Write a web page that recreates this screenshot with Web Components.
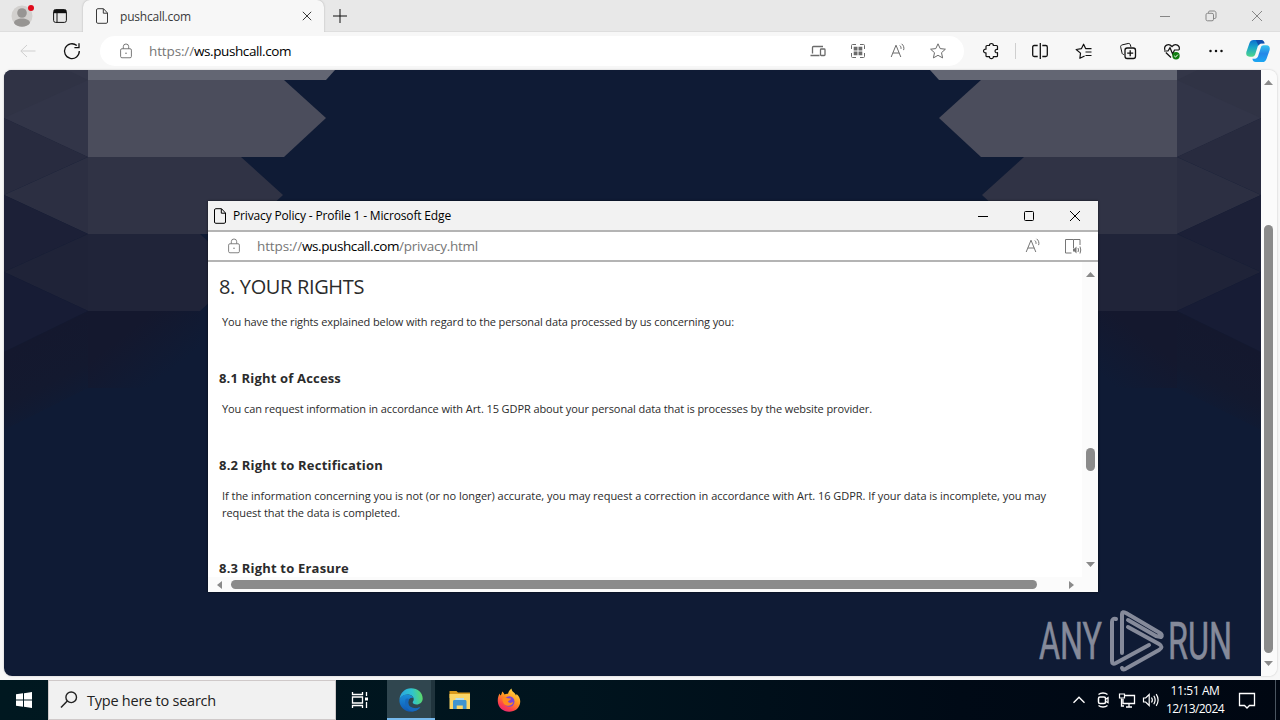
<!DOCTYPE html>
<html lang="en">
<head>
<meta charset="utf-8">
<title>pushcall.com</title>
<style>
  html, body {
    margin: 0;
    height: 100%;
    overflow: hidden;
  }

  body {
    font-family: "Open Sans", "Noto Sans", sans-serif;
    font-size: 12px;
  }
</style>
</head>
<body>
<desktop-screen></desktop-screen>

<script>
// Single line of text, spaced out to a given width
class TextRun extends HTMLElement {
  constructor() {
    super();
    this.attachShadow({ mode: 'open' });
  }

  connectedCallback() {
    this.shadowRoot.innerHTML = `<style>
        :host { display: inline-block; white-space: nowrap; }
        span { display: inline-block; }
      </style><span><slot></slot></span>`;
    const span = this.shadowRoot.querySelector('span');
    const width = Number(this.getAttribute('width'));
    if (!width) return;
    const natural = span.getBoundingClientRect().width;
    span.style.letterSpacing = `${(width - natural) / this.textContent.length}px`;
    this.style.width = `${width}px`;
  }
}
customElements.define('text-run', TextRun);

const ICONS = {
  profile: `<circle cx="10" cy="10" r="10.5" fill="#d2d0ce" stroke="none"/><circle cx="10" cy="7" r="4.8" fill="#979593" stroke="none"/><path d="M2 17c0-6 16-6 16 0-3 5-13 5-16 0z" fill="#979593" stroke="none"/>`,
  tabs: `<rect x="3.6" y="3.6" width="12.8" height="12.8" rx="2"/><path d="M4 5.5h12" stroke-width="3.4"/><path d="M7 7v9" />`,
  page: `<path d="M4.5 4c0-.8.5-1.300 1.300-1.300h5.700l4 4.300v9c0 .8-.5 1.300-1.300 1.300H5.800c-.8 0-1.300-.5-1.300-1.300zM11.300 2.900v4.300h4"/>`,
  close: `<path d="M5.800 5.800l8.400 8.400M14.200 5.800l-8.400 8.400"/>`,
  bigclose: `<path d="M5 5l10 10M15 5L5 15"/>`,
  plus: `<path d="M10 3v14M3 10h14"/>`,
  min: `<path d="M5 10.500h10"/>`,
  max: `<rect x="5.500" y="5.500" width="9" height="9" rx="1"/>`,
  restore: `<rect x="5" y="7.300" width="7.500" height="7.500" rx="1.500"/><path d="M7.500 7V6.300c0-.8.5-1.300 1.300-1.300h4.200c1.200 0 2 .8 2 2v4.200c0 .8-.4 1.300-1.200 1.300h-1"/>`,
  back: `<path d="M17.500 10H3M9 4l-6.200 6L9 16"/>`,
  refresh: `<path d="M17.300 10A7.400 7.400 0 1 1 14.800 4.600M17 2.300v4.400h-4.600" stroke-width="1.300"/>`,
  lock: `<rect x="4" y="7.500" width="12" height="10" rx="1.500"/><path d="M7 7.500V5.200a3 3 0 0 1 6 0v2.300"/><circle cx="10" cy="12.500" r=".8" fill="currentColor" stroke="none"/>`,
  devices: `<path d="M4.500 12.500v-6c0-.6.4-1 1-1H15M2.500 14.500h9" stroke-width="1.300"/><rect x="12.500" y="8" width="4.500" height="6.500" rx=".8" stroke-width="1.300"/>`,
  grid: `<path d="M3.500 8V4.500c0-.6.4-1 1-1H8M12 3.500h3.500c.6 0 1 .4 1 1V8M16.500 12v3.500c0 .6-.4 1-1 1H12M8 16.500H4.500c-.6 0-1-.4-1-1V12"/><path d="M5.700 5.700h3.800v3.800H5.700zM10.500 5.700h3.800v3.800h-3.800zM5.700 10.500h3.800v3.800H5.700zM10.500 10.500h3.800v3.800h-3.800z" fill="currentColor" stroke="none"/>`,
  read: `<path d="M3.200 16L8 4.200 12.800 16M4.800 12h6.400M11.800 4.500c1 .8 1.400 2 1.200 3.400M13.600 2.800c2 1.500 2.800 4 2 6.300"/>`,
  star: `<path d="M10 2.800l2.200 4.800 5.200.6-3.900 3.500 1.100 5.200L10 14.300l-4.600 2.600 1.100-5.200-3.900-3.500 5.200-.6z" stroke-linejoin="round"/>`,
  puzzle: `<path d="M6 4.500h2.500c-.5-2.700 4.300-2.700 3.800 0h3.200c.6 0 1 .4 1 1v3c-3-.7-3.500 3.800 0 3.200v3c0 .6-.4 1-1 1h-3.200c.5 2.600-4.300 2.600-3.800 0H6c-.6 0-1-.4-1-1v-2.900c-3.300.5-3.300-4.100 0-3.600V5.500c0-.6.4-1 1-1z" stroke-width="1.200" stroke-linejoin="round"/>`,
  split: `<path d="M7.700 4.500H4.200c-1 0-1.500.5-1.500 1.500v8c0 1 .5 1.500 1.500 1.500h3.500M12.300 4.500h3.500c1 0 1.500.5 1.500 1.500v8c0 1-.5 1.500-1.500 1.500h-3.500M10.300 2v16" stroke-width="1.300"/>`,
  favorites: `<path d="M10.600 15l-4.700 2.300.6-5.200L2.200 8.500l5.300-.9 2.100-4.400 2 4.400h5.900M11.500 11h6M11.500 14.500h6" stroke-width="1.200" stroke-linejoin="round"/>`,
  collections: `<path d="M6 13.500c-1 0-1.800-.5-2-1.600L2.700 6.200c-.3-1.100.3-2 1.400-2.300l6-1.400c1.100-.2 2 .3 2.300 1.400l.5 2"/><rect x="7" y="7" width="10.500" height="10.500" rx="2.200" stroke-width="1.300"/><path d="M12.200 9.200v6M9.200 12.200h6" stroke-width="1.300"/>`,
  heart: `<path d="M2.900 9C1.500 4.500 6.500 1.700 10 5.500c3.500-3.800 8.500-1 7.100 3.500M3.800 11.500L9 16.500M2 10h4l2-3.300 2.600 6.300L12.500 9H17" stroke-width="1.200"/><circle cx="14" cy="14.800" r="3.700" fill="#107c10" stroke="none"/><path d="M12.200 14.800l1.300 1.300 2.400-2.500" stroke="#fff"/>`,
  dots: `<g fill="currentColor" stroke="none"><circle cx="4.500" cy="10" r="1.250"/><circle cx="10" cy="10" r="1.250"/><circle cx="15.500" cy="10" r="1.250"/></g>`,
  immersive: `<path d="M8.500 17H2.500V3.500h8V12M10.500 3.500H17V9" stroke-width="1"/><path d="M10 12.500h1.500l2-2v7l-2-2H10z" fill="currentColor" stroke="none"/><path d="M15 12q1 2 0 4M17 10.500q1.500 3.500 0 7"/>`,
  copilot: `<defs>
      <linearGradient id="a" x1="0" y1="0" x2="0" y2="1"><stop offset="0" stop-color="#0b6fd0"/><stop offset=".45" stop-color="#1aa6c8"/><stop offset="1" stop-color="#4fd58a"/></linearGradient>
      <linearGradient id="b" x1="0" y1="0" x2="0" y2="1"><stop offset="0" stop-color="#35c3ee"/><stop offset=".5" stop-color="#2587e8"/><stop offset="1" stop-color="#1ba7f2"/></linearGradient>
    </defs>
    <g stroke="none"><path d="M6 0h6c2 0 2.600 1 3.100 3h-2.300c-1.600 0-2.500 1-3 2.600L7.500 13c-.5 1.500-1.300 2.200-2.600 2.200H2.500C0 15.200-1.200 13.600-.6 11L2.200 3C3 .8 4 0 6 0z" fill="url(#a)"/>
    <path d="M8 0h5c1.800 0 2.600 1.200 3.100 3.200h-2.600c-1.300 0-2.200.5-3 2z" fill="#0f4fae"/>
    <path d="M14 20H8c-2 0-2.600-1-3.100-3h2.300c1.600 0 2.500-1 3-2.600L12.500 7c.5-1.500 1.300-2.200 2.600-2.200h2.400c2.500 0 3.700 1.600 3.100 4.200L17.800 17c-.8 2.200-1.800 3-3.800 3z" fill="url(#b)"/></g>`,
  windows: `<path d="M2 4.300l7-1v6.200H2zM10 3.200L18 2v7.500h-8zM2 10.500h7v6.300l-7-1zM10 10.500h8V18l-8-1.200z" fill="currentColor" stroke="none"/>`,
  search: `<circle cx="12.200" cy="7.300" r="5.300" stroke-width="1.400"/><path d="M8.300 11L2 17.500" stroke-width="1.500"/>`,
  taskview: `<path d="M2.500 2v2.500h10V2M2.500 18v-2.500h10V18M2.500 7h10v6h-10zM16.500 2v4M16.500 12v6" stroke-width="1.300"/><path d="M15 7.500h3v3h-3z" fill="currentColor" stroke="none"/>`,
  edge: `<defs>
      <linearGradient id="c" x1="0" y1=".4" x2="1" y2=".3"><stop offset="0" stop-color="#2aa5e0"/><stop offset=".55" stop-color="#2fc3cf"/><stop offset="1" stop-color="#5edb62"/></linearGradient>
      <linearGradient id="d" x1="0" y1="0" x2="0" y2="1"><stop offset="0" stop-color="#1a8fd8"/><stop offset="1" stop-color="#0f58b5"/></linearGradient>
    </defs>
    <g stroke="none"><path d="M-1.500 9.500C-1 3 4-1.700 10-1.700c7 0 11.700 4.700 11.700 10.200 0 3.800-3 6-6 6-2.700 0-4.200-1-4-2.200.2-1 1.200-1.400 1-3.500C12.400 6 9.500 4.500 6.500 4.500c-4 0-6.700 2.200-8 5z" fill="url(#c)"/>
    <path d="M-1.600 9.800c1.200-3.500 4.300-5.500 7.800-5.400 3 .1 5.600 1.600 6.300 3.600-3-1-5.300 1.300-5.300 4.500 0 4.500 4.300 6.500 8 6 1.600-.2 3-.8 4-1.400C17.500 20 14 21.700 10 21.700 3 21.700-2 16-1.600 9.800z" fill="url(#d)"/>
    <path d="M4.700 9C2.500 13.500 6 20.500 11.500 21.600c3.500-.3 6.300-2 8-4.500-5 2.500-12.300.5-12.300-4.600 0-1.500.3-2.600.9-3.500-1.300-.8-2.600-.8-3.400 0z" fill="#1669bd"/></g>`,
  folder: `<g stroke="none"><path d="M-.5 1h7l1.500 1.500h12V8h-20.500z" fill="#d99a1c"/><path d="M-.5 4h20.500v15H-.5z" fill="#fbd667"/><path d="M3 19v-7.500c0-1 .5-1.500 1.500-1.500H15c1 0 1.500.5 1.500 1.500V19h-3.700v-3.500H6.700V19z" fill="#3f94cf"/><path d="M5.500 10V8h8.500v2z" fill="#b6deee"/></g>`,
  firefox: `<defs><linearGradient id="f" x1=".8" y1="0" x2=".25" y2="1"><stop offset="0" stop-color="#ffe24a"/><stop offset=".45" stop-color="#ff9620"/><stop offset=".8" stop-color="#fb3c4e"/><stop offset="1" stop-color="#e3267a"/></linearGradient></defs>
    <g stroke="none"><path d="M.6 3.500c.2 1 .6 1.700 1 2.100C2.300 4.500 3 3 3.200 1.500c1.300.8 1.900 2 2.300 3C6.800 3.700 8 3.500 9 3.800 9.300 1.700 10.500 0 12.500-1.600c.3 2.400 1.200 3.100 3 4.600.7.700 1.200 1.500 1.500 2.500.4-.3.500-1 .5-1.500C20 6 21.400 8.500 21.200 12c-.4 6-5.200 9.800-11 9.800C4 21.800-.8 17.500-1.200 11.500-1.400 8.500-.6 5.500.6 3.500z" fill="url(#f)"/>
    <circle cx="10.300" cy="11.500" r="5.200" fill="#7a45d8"/><path d="M3.500 8c2-.8 4-.7 5.200.3l3.300.3c0 1.600-2.500 1.900-3 3 .8 1.900 3.800 1.500 5.300.2-.4 3.700-5.500 5.400-8.800 2.700C3.800 12.700 3.200 10.500 3.500 8z" fill="#ff8a1e"/></g>`,
  up: `<path d="M4.500 12.700L10 7.300l5.500 5.400" stroke-width="1.400"/>`,
  camera: `<path d="M5.500 4.500c2.500-2 6.500-2 9 0M5.500 15.500c2.500 2 6.500 2 9 0M12.500 9.200l2.500-1.500v5l-2.500-1.500" stroke-width="1.300"/><rect x="5.500" y="7" width="7" height="6.500" rx="1.500" stroke-width="1.500"/>`,
  network: `<path d="M8 5.500h9.500v8H6V9M9 17h6M12 13.500V17M4.500 8.500V16H7" stroke-width="1.300"/><path d="M2.500 4h5v4h-5z" stroke-width="1.200"/>`,
  volume: `<path d="M2.500 8h2.200l3.500-3.500v11L4.700 12H2.500zM10.500 7.500q1.700 2.500 0 5M12.800 5.800q2.700 4.200 0 8.400M15.200 4.200q3.800 5.800 0 11.600" stroke-width="1.200"/>`,
  notice: `<path d="M2.500 3.500h15v12h-5L10 18l-2.500-2.500h-5z" stroke-width="1.300"/>`
};

class UiIcon extends HTMLElement {
  constructor() {
    super();
    this.attachShadow({ mode: 'open' });
  }

  connectedCallback() {
    const size = this.getAttribute('size') || 20;
    this.shadowRoot.innerHTML = `
      <style>
        :host { display: inline-flex; align-items: center; justify-content: center; flex: none; }
        svg { display: block; overflow: visible; }
      </style>
      <svg width="${size}" height="${size}" viewBox="0 0 20 20" fill="none" stroke="currentColor">${ICONS[this.getAttribute('name')]}</svg>
    `;
  }
}
customElements.define('ui-icon', UiIcon);

class ScrollBar extends HTMLElement {
  constructor() {
    super();
    this.attachShadow({ mode: 'open' });
  }

  // "before" is the gap between the first arrow and the thumb, "length" the thumb's length
  connectedCallback() {
    const flat = this.hasAttribute('horizontal');
    const before = this.getAttribute('before');
    const length = this.getAttribute('length');
    this.shadowRoot.innerHTML = `
      <style>
        :host {
          display: flex;
          flex-direction: ${flat ? 'row' : 'column'};
          align-items: center;
          background: #fbfbfb;
          box-sizing: border-box;
        }
        svg { display: block; flex: none; fill: #8a8a8a; }
        .thumb {
          flex: none;
          background: #8b8b8b;
          border-radius: 5px;
          ${flat ? `width: ${length}px; height: 9px; margin-left: ${before}px` : `height: ${length}px; width: 9px; margin-top: ${before}px`};
        }
        .space { flex: 1; }
      </style>
      ${flat
        ? '<svg width="5" height="8"><path d="M5 0v8L0 4z"/></svg>'
        : '<svg width="9" height="5"><path d="M0 5h9L4.500 0z"/></svg>'}
      <div class="thumb"></div>
      <div class="space"></div>
      ${flat
        ? '<svg width="5" height="8"><path d="M0 0v8l5-4z"/></svg>'
        : '<svg width="9" height="5"><path d="M0 0h9L4.500 5z"/></svg>'}
    `;
  }
}
customElements.define('scroll-bar', ScrollBar);

class TabStrip extends HTMLElement {
  constructor() {
    super();
    this.attachShadow({ mode: 'open' });
  }

  connectedCallback() {
    this.shadowRoot.innerHTML = `
      <style>
        :host { display: flex; height: 32px; background: #e8e8e8; color: #111; box-shadow: inset 0 -1px #dedede; }
        .profile { position: relative; width: 20px; margin-left: 12px; display: flex; }
        .badge { position: absolute; right: -2px; top: 5px; width: 6px; height: 6px; border-radius: 50%; background: #e00b1c; }
        .tabs { width: 20px; margin: 0 13px 0 18px; }
        .tab {
          width: 241px;
          box-sizing: border-box;
          padding: 0 7px 0 9px;
          display: flex;
          align-items: center;
          background: #f7f7f7;
          border-radius: 7px 7px 0 0;
          box-shadow: 0 0 2px #aaa;
          clip-path: inset(0 -2px);
          font-size: 12px;
          color: #3a3a3a;
        }
        .tab text-run { margin-left: 8px; }
        .tab .x { margin-left: auto; }
        .plus { margin-left: 6px; }
        .controls { margin-left: auto; display: flex; color: #868686; }
        .controls ui-icon { width: 46px; }
      </style>
      <div class="profile"><ui-icon name="profile"></ui-icon><div class="badge"></div></div>
      <ui-icon class="tabs" name="tabs"></ui-icon>
      <div class="tab">
        <ui-icon name="page"></ui-icon>
        <text-run width="71">pushcall.com</text-run>
        <ui-icon class="x" name="close"></ui-icon>
      </div>
      <ui-icon class="plus" name="plus"></ui-icon>
      <div class="controls"><ui-icon name="min"></ui-icon><ui-icon name="restore"></ui-icon><ui-icon name="bigclose"></ui-icon></div>
    `;
  }
}
customElements.define('tab-strip', TabStrip);

class BrowserToolbar extends HTMLElement {
  constructor() {
    super();
    this.attachShadow({ mode: 'open' });
  }

  connectedCallback() {
    this.shadowRoot.innerHTML = `
      <style>
        :host { display: flex; align-items: center; height: 38px; background: #f7f7f7; color: #111; box-sizing: border-box; padding-left: 8px; }
        ui-icon { width: 40px; height: 30px; }
        .back { color: #cfcfcf; margin-right: 4px; }
        .omnibox {
          display: flex;
          align-items: center;
          width: 864px;
          height: 30px;
          margin-left: 8px;
          box-sizing: border-box;
          padding: 0 6px;
          border-radius: 15px;
          background: #fff;
          font-size: 13.5px;
          color: #000;
        }
        .omnibox ui-icon { color: #6b6b6b; }
        .scheme { color: #767676; margin-left: 3px; }
        .fill { flex: 1; }
        .puzzle { margin-left: 7px; }
        .sep { width: 1px; height: 16px; background: #cfcfcf; margin: 0 4px; }
        .group { display: flex; gap: 4px; }
        .copilot { width: 40px; margin-left: 2px; }
      </style>
      <ui-icon class="back" name="back"></ui-icon>
      <ui-icon name="refresh"></ui-icon>
      <div class="omnibox">
        <ui-icon name="lock" size="18"></ui-icon>
        <text-run class="scheme" width="45">https://</text-run><text-run width="97">ws.pushcall.com</text-run>
        <div class="fill"></div>
        <ui-icon name="devices"></ui-icon>
        <ui-icon name="grid"></ui-icon>
        <ui-icon name="read"></ui-icon>
        <ui-icon name="star"></ui-icon>
      </div>
      <ui-icon class="puzzle" name="puzzle"></ui-icon>
      <div class="sep"></div>
      <div class="group">
        <ui-icon name="split"></ui-icon>
        <ui-icon name="favorites"></ui-icon>
        <ui-icon name="collections"></ui-icon>
        <ui-icon name="heart"></ui-icon>
        <ui-icon name="dots"></ui-icon>
      </div>
      <ui-icon class="copilot" name="copilot" size="22"></ui-icon>
    `;
  }
}
customElements.define('browser-toolbar', BrowserToolbar);

// Folded ribbons on both sides of the landing page
class RibbonArt extends HTMLElement {
  constructor() {
    super();
    this.attachShadow({ mode: 'open' });
  }

  connectedCallback() {
    const side = `
      <path fill="#636673" d="M88 70H335L326 80H88z"/>
      <path fill="#4b4d5c" d="M88 80H284L326 118 284 157H88z"/>
      <path fill="#303345" d="M88 157H241L283 195 241 234H88z"/>
      <path fill="#202439" d="M88 234H200L242 272 200 311H88z"/>
      <path fill="url(#fade)" d="M88 311H200V388H88z"/>
      <path fill="#303345" d="M4 70H88V157L4 118z"/>
      <path fill="#333648" d="M67 70H88V80z"/>
      <path fill="#323548" d="M88 80V157L4 118z"/>
      <path fill="#282b3f" d="M4 118L88 157 4 195z"/>
      <path fill="#2c2f42" d="M88 157V234L4 195z"/>
      <path fill="#1c2037" d="M4 195L88 234 4 272z"/>
      <path fill="#1f2338" d="M88 234V311L4 272z"/>
      <path fill="#171c35" d="M4 272L88 311 4 352z"/>
      <path fill="url(#strip)" d="M88 311V388L4 430V352z"/>
    `;
    this.shadowRoot.innerHTML = `
      <style>
        :host { display: block; background: #0f1b35; }
        svg { display: block; }
      </style>
      <svg width="1257" height="606" viewBox="4 70 1257 606">
        <defs>
          <linearGradient id="fade" gradientUnits="userSpaceOnUse" x1="130" y1="330" x2="165" y2="375"><stop offset="0" stop-color="#14182e"/><stop offset="1" stop-color="#0f1b35"/></linearGradient>
          <linearGradient id="strip" gradientUnits="userSpaceOnUse" x1="30" y1="340" x2="65" y2="410"><stop offset="0" stop-color="#14182e"/><stop offset=".6" stop-color="#13192f"/><stop offset="1" stop-color="#0f1b35"/></linearGradient>
        </defs>
        <g>${side}</g>
        <g transform="translate(1265) scale(-1 1)">${side}</g>
      </svg>
    `;
  }
}
customElements.define('ribbon-art', RibbonArt);

class WaterMark extends HTMLElement {
  constructor() {
    super();
    this.attachShadow({ mode: 'open' });
  }

  connectedCallback() {
    this.shadowRoot.innerHTML = `
      <style>
        :host { display: block; }
        svg { display: block; overflow: visible; }
        text { font: 400 51px Roboto, sans-serif; fill: #858a9a; stroke: #858a9a; stroke-width: .6; }
        path { fill: none; stroke: #858a9a; stroke-width: 4; stroke-linejoin: round; stroke-linecap: round; }
      </style>
      <svg width="194" height="62" viewBox="1038 610 194 62">
        <text x="1039" y="659" textLength="63" lengthAdjust="spacingAndGlyphs">ANY</text>
        <text x="1168" y="659" textLength="64" lengthAdjust="spacingAndGlyphs">RUN</text>
        <path d="M1116 619Q1112 618 1112 622V661Q1112 665 1116 663L1149 645"/>
        <path d="M1122 653V614Q1122 611 1126 613L1160 633Q1163 635 1161 637L1156 636 1128 620"/>
        <path d="M1122 668Q1123 671 1127 668L1159 650Q1164 647 1159 644L1128 627"/>
      </svg>
    `;
  }
}
customElements.define('water-mark', WaterMark);

class PopupWindow extends HTMLElement {
  constructor() {
    super();
    this.attachShadow({ mode: 'open' });
  }

  connectedCallback() {
    this.shadowRoot.innerHTML = `
      <style>
        :host { display: flex; flex-direction: column; background: #fff; color: #000; }
        .title {
          display: flex;
          align-items: center;
          height: 31px;
          box-sizing: border-box;
          padding-left: 2px;
          background: #f2f2f2;
          border-bottom: 2px solid #b4b4b4;
          font-size: 12px;
        }
        .title text-run { margin-left: 3px; }
        .controls { margin-left: auto; display: flex; }
        .controls ui-icon { width: 46px; }
        .address {
          display: flex;
          align-items: center;
          height: 30px;
          box-sizing: border-box;
          padding: 0 5px 0 6px;
          border-bottom: 2px solid #b4b4b4;
          font-size: 13.5px;
        }
        .address ui-icon { width: 40px; color: #767676; }
        .grey { color: #767676; }
        .scheme { margin-left: 3px; }
        .fill { flex: 1; }
        .body { flex: 1; min-height: 0; display: grid; grid-template: 1fr 15px / 1fr 16px; }
        .content { overflow: hidden; padding: 12px 11px 0; }
        .vertical { padding: 10px 0; }
        .horizontal { padding: 0 8px 0 9px; }
        .corner { background: #fbfbfb; }
      </style>
      <div class="title">
        <ui-icon name="page"></ui-icon>
        <text-run width="218">Privacy Policy - Profile 1 - Microsoft Edge</text-run>
        <div class="controls"><ui-icon name="min"></ui-icon><ui-icon name="max"></ui-icon><ui-icon name="bigclose"></ui-icon></div>
      </div>
      <div class="address">
        <ui-icon name="lock" size="18"></ui-icon>
        <text-run class="grey scheme" width="45">https://</text-run><text-run width="97">ws.pushcall.com</text-run><text-run class="grey" width="79">/privacy.html</text-run>
        <div class="fill"></div>
        <ui-icon name="read"></ui-icon>
        <ui-icon name="immersive"></ui-icon>
      </div>
      <div class="body">
        <div class="content"><slot></slot></div>
        <scroll-bar class="vertical" before="171" length="23"></scroll-bar>
        <scroll-bar class="horizontal" horizontal before="9" length="806"></scroll-bar>
        <div class="corner"></div>
      </div>
    `;
  }
}
customElements.define('popup-window', PopupWindow);

class PolicyText extends HTMLElement {
  constructor() {
    super();
    this.attachShadow({ mode: 'open' });
  }

  connectedCallback() {
    this.shadowRoot.innerHTML = `
      <style>
        :host { display: block; color: #2b2b2b; }
        text-run { display: block; }
        h2 { margin: 0 0 13px; font-size: 20px; line-height: 26px; font-weight: 400; }
        h3 { margin: 0 0 13px; font-size: 13px; line-height: 18px; font-weight: 700; }
        p { margin: 0 3px 39px; font-size: 11px; line-height: 17px; }
        p.long { margin-bottom: 38px; }
      </style>
      <h2><text-run width="145">8. YOUR RIGHTS</text-run></h2>
      <p><text-run width="512">You have the rights explained below with regard to the personal data processed by us concerning you:</text-run></p>
      <h3><text-run width="122">8.1 Right of Access</text-run></h3>
      <p><text-run width="650">You can request information in accordance with Art. 15 GDPR about your personal data that is processes by the website provider.</text-run></p>
      <h3><text-run width="164">8.2 Right to Rectification</text-run></h3>
      <p class="long">
        <text-run width="824">If the information concerning you is not (or no longer) accurate, you may request a correction in accordance with Art. 16 GDPR. If your data is incomplete, you may</text-run>
        <text-run width="178">request that the data is completed.</text-run>
      </p>
      <h3><text-run width="130">8.3 Right to Erasure</text-run></h3>
    `;
  }
}
customElements.define('policy-text', PolicyText);

class TaskBar extends HTMLElement {
  constructor() {
    super();
    this.attachShadow({ mode: 'open' });
  }

  connectedCallback() {
    this.shadowRoot.innerHTML = `
      <style>
        :host { display: flex; height: 40px; background: linear-gradient(90deg, #001820, #00141e 45%, #000a16 75%, #000712); color: #fff; }
        .start { width: 48px; }
        .search {
          display: flex;
          align-items: center;
          width: 288px;
          box-sizing: border-box;
          padding-left: 10px;
          background: #f1f1f1;
          border: 1px solid #cfc9c9;
          color: #222;
          font-size: 14.5px;
        }
        .search text-run { margin-left: 8px; }
        .app { width: 48px; }
        .view { width: 48px; }
        .edge { margin-left: 3px; background: #30464f; box-shadow: inset 0 -2px #76b9ed, inset -4px 0 #20343d; }
        .edge + .app, .edge + .app + .app { margin-left: 1px; }
        .tray { margin-left: auto; display: flex; align-items: center; }
        .tray ui-icon { width: 24px; }
        .clock { width: 64px; font-size: 12px; line-height: 18px; display: flex; flex-direction: column; align-items: center; }
        .tray .notice { width: 40px; }
        .peek { width: 4px; height: 40px; border-left: 1px solid #4a5560; margin-left: 8px; }
      </style>
      <ui-icon class="start" name="windows"></ui-icon>
      <div class="search"><ui-icon name="search"></ui-icon><text-run width="129">Type here to search</text-run></div>
      <ui-icon class="view" name="taskview"></ui-icon>
      <ui-icon class="app edge" name="edge"></ui-icon>
      <ui-icon class="app" name="folder"></ui-icon>
      <ui-icon class="app" name="firefox"></ui-icon>
      <div class="tray">
        <ui-icon name="up"></ui-icon>
        <ui-icon name="camera"></ui-icon>
        <ui-icon name="network"></ui-icon>
        <ui-icon name="volume"></ui-icon>
        <div class="clock"><text-run width="49">11:51 AM</text-run><text-run width="58">12/13/2024</text-run></div>
        <ui-icon class="notice" name="notice"></ui-icon>
        <div class="peek"></div>
      </div>
    `;
  }
}
customElements.define('task-bar', TaskBar);

class DesktopScreen extends HTMLElement {
  constructor() {
    super();
    this.attachShadow({ mode: 'open' });
  }

  connectedCallback() {
    this.shadowRoot.innerHTML = `
      <style>
        :host { display: flex; flex-direction: column; position: relative; width: 1280px; height: 720px; background: #f7f7f7; }
        .view {
          display: grid;
          grid-template-columns: 1257px 16px;
          width: 1273px;
          height: 606px;
          margin: 0 0 4px 4px;
          border-radius: 8px;
          overflow: hidden;
          box-shadow: 0 0 2px #bbb;
        }
        .view scroll-bar { padding: 10px 1px 10px 0; }
        popup-window { position: absolute; left: 208px; top: 201px; width: 890px; height: 391px; box-shadow: 0 0 2px #000a; }
        water-mark { position: absolute; left: 1038px; top: 610px; }
      </style>
      <tab-strip></tab-strip>
      <browser-toolbar></browser-toolbar>
      <div class="view">
        <ribbon-art></ribbon-art>
        <scroll-bar before="140" length="428"></scroll-bar>
      </div>
      <task-bar></task-bar>
      <popup-window><policy-text></policy-text></popup-window>
      <water-mark></water-mark>
    `;
  }
}
customElements.define('desktop-screen', DesktopScreen);
</script>
</body>
</html>
